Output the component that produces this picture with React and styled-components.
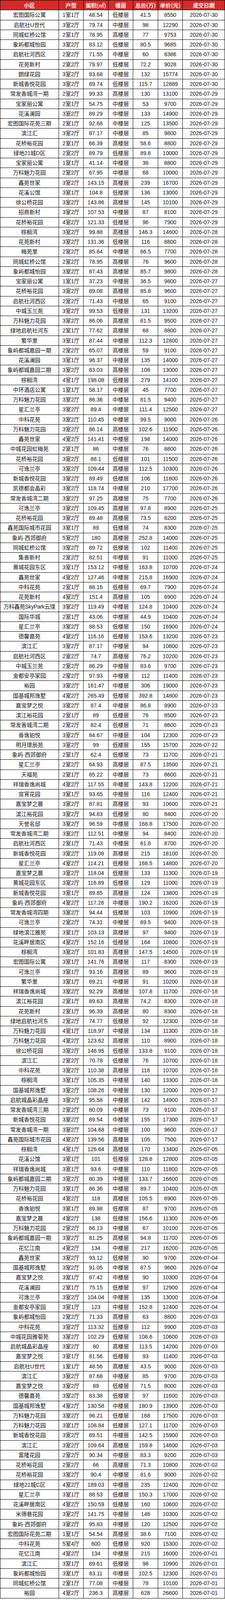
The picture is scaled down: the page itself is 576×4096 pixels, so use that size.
import React from 'react'
import styled, { createGlobalStyle } from 'styled-components'

const GlobalStyle = createGlobalStyle`
  html, body {
    margin: 0;
    padding: 0;
    background: #fff;
  }
  body {
    font-family: "Liberation Sans", "Noto Sans CJK SC", sans-serif;
  }
`

const raw = `宏图国际公寓|1室1厅|48.54|低楼层|41.5|8550|2026-07-30
启航社U世代|3室2厅|79.74|中楼层|98|12290|2026-07-30
同城虹桥公馆|2室1厅|78.95|高楼层|77|9753|2026-07-30
象屿都城怡园|3室2厅|83.12|低楼层|80.5|9685|2026-07-30
启航社河西区|2室2厅|71.55|中楼层|60|8386|2026-07-30
花苑新村|2室2厅|79.97|低楼层|72.2|9028|2026-07-30
朗绿花园|3室2厅|83.68|中楼层|132|15774|2026-07-30
新城香悦花园|3室2厅|89.74|低楼层|115.7|12889|2026-07-30
常发香城湾一期|2室2厅|99.33|高楼层|130|13100|2026-07-29
宝家丽公寓|2室1厅|54.75|中楼层|53|9700|2026-07-29
花溪澜园|3室2厅|89.29|中楼层|133|14900|2026-07-29
宏图国际花苑三期|2室1厅|92.68|中楼层|125|13500|2026-07-29
滨江汇|3室2厅|87.17|中楼层|85|9800|2026-07-29
花桥裕花园|2室1厅|66.39|高楼层|58.6|8800|2026-07-29
绿地21城D区|2室2厅|89.79|低楼层|89.8|10000|2026-07-29
宝家丽公寓|1室1厅|41.14|中楼层|36|8800|2026-07-29
万科魅力花园|2室2厅|67.95|中楼层|68|10000|2026-07-29
鑫苑世家|3室2厅|143.15|高楼层|239|16700|2026-07-29
花溪公馆|3室1厅|104.8|低楼层|136|13000|2026-07-29
徐公桥花园|3室2厅|143.86|高楼层|145|10100|2026-07-29
招商新村|3室2厅|107.53|中楼层|87|8100|2026-07-29
花桥裕花园|4室2厅|121.33|低楼层|96|7900|2026-07-29
棕榈湾|3室2厅|99.88|高楼层|146.3|14600|2026-07-28
花苑新村|3室2厅|131.36|低楼层|116|8800|2026-07-28
梅苑里|2室2厅|85.84|中楼层|66.5|7700|2026-07-28
同城虹桥公馆|2室2厅|78.95|高楼层|76|9600|2026-07-28
象屿都城怡园|3室2厅|87.43|高楼层|85.7|9800|2026-07-28
宝家丽公寓|1室1厅|37.23|中楼层|36.5|9800|2026-07-27
花桥裕花园|3室2厅|89.08|高楼层|85.8|9600|2026-07-27
启航社河西区|2室2厅|71.43|中楼层|65|9100|2026-07-27
中城玉兰苑|3室2厅|99.53|低楼层|131|13200|2026-07-27
万科魅力花园|3室2厅|86.06|高楼层|81.5|9500|2026-07-27
绿地启航社河东|2室1厅|77.62|高楼层|68|8800|2026-07-27
繁华里|3室1厅|87.44|中楼层|112.3|12800|2026-07-27
象屿都城嘉园一期|2室2厅|65.07|高楼层|59|9100|2026-07-27
花溪澜园|3室1厅|96.37|中楼层|135|14000|2026-07-27
象屿都城嘉园二期|3室2厅|83.03|高楼层|108|13000|2026-07-27
棕榈湾|4室1厅|198.08|低楼层|279|14100|2026-07-27
中环酒店公寓|1室1厅|58.17|中楼层|45|7700|2026-07-27
万科魅力花园|3室2厅|86.36|中楼层|81.5|9400|2026-07-27
星汇兰亭|3室2厅|89.4|中楼层|111.4|12500|2026-07-27
中科花苑|3室2厅|110.45|中楼层|99.5|9000|2026-07-26
万科魅力花园|3室2厅|86.14|高楼层|102.6|11900|2026-07-26
鑫苑世家|4室2厅|141.41|中楼层|198|14000|2026-07-26
中城花园虹梅苑|2室1厅|86|中楼层|76|8800|2026-07-26
花桥裕花园|3室2厅|88.1|低楼层|101|11500|2026-07-26
可逸兰亭|3室2厅|109.44|高楼层|112.5|10300|2026-07-26
新城香悦花园|3室2厅|89.49|低楼层|106|11800|2026-07-26
凯德都会晶彩|3室2厅|118.74|中楼层|210|17700|2026-07-26
常发香城湾二期|3室2厅|97.25|高楼层|75|7700|2026-07-26
可逸兰亭|3室2厅|109.45|高楼层|97.8|8900|2026-07-25
花桥裕花园|3室2厅|89.48|高楼层|73.5|8200|2026-07-25
鑫苑国际城市花园|3室1厅|89|低楼层|74|8300|2026-07-25
象屿·西郊御府|5室2厅|180|高楼层|252.8|14000|2026-07-25
同城虹桥公馆|3室2厅|89.72|低楼层|102|11400|2026-07-25
集善新村|2室2厅|82.51|中楼层|91|11000|2026-07-25
黄城花园东区|3室1厅|153.12|中楼层|163.8|10700|2026-07-24
鑫苑世家|4室2厅|127.46|中楼层|215.8|16900|2026-07-24
中科花苑|2室1厅|88.16|低楼层|69.7|7900|2026-07-24
花苑新村|4室2厅|151.4|高楼层|105|6900|2026-07-24
万科鑫苑SkyPark云璞|3室2厅|119.49|中楼层|124.8|10400|2026-07-24
国际华城|2室1厅|43.06|中楼层|44.9|10400|2026-07-24
星汇兰亭|3室2厅|88.53|低楼层|150|16900|2026-07-24
德馨嘉苑|4室2厅|116.16|低楼层|153.6|13200|2026-07-23
滨江汇|3室2厅|87.17|中楼层|94|10800|2026-07-23
启航社河西区|2室2厅|74.7|高楼层|76.2|10200|2026-07-23
中城玉兰苑|2室2厅|86.29|中楼层|83.6|9700|2026-07-23
金都安亭家园|2室2厅|97.93|中楼层|112|11400|2026-07-23
裕园|3室2厅|161.47|中楼层|306|19000|2026-07-23
国基城邦逸墅|4室2厅|265.49|低楼层|392.8|14800|2026-07-23
嘉宝梦之悦|3室2厅|87.4|中楼层|86.8|9900|2026-07-23
滨江裕花园|2室1厅|89|低楼层|76|8500|2026-07-23
常发香城湾二期|2室2厅|82.4|低楼层|71|8600|2026-07-23
香逸铂悦|3室2厅|84.67|中楼层|104|12300|2026-07-23
明月璟辰苑|3室2厅|99|低楼层|155|15700|2026-07-22
象屿·西郊御府|2室1厅|62.4|低楼层|73|11700|2026-07-21
星汇兰亭|2室2厅|64.93|高楼层|87.5|13500|2026-07-21
天福苑|2室1厅|85.22|中楼层|73|8600|2026-07-21
祥瑞香逸尚城|4室2厅|117.55|中楼层|143.8|12200|2026-07-21
宫宵花园|3室1厅|93.65|中楼层|116|12400|2026-07-21
嘉宝梦之晨|3室2厅|87.81|高楼层|93|10600|2026-07-21
滨江裕花园|3室2厅|94.83|低楼层|80|8400|2026-07-20
天誉名邸|3室2厅|96.59|中楼层|168.8|17500|2026-07-20
常发香城湾二期|3室2厅|112.51|中楼层|94|8400|2026-07-20
启航社河西区|2室1厅|71.43|中楼层|61.8|8700|2026-07-20
新城香悦花园|3室2厅|119.08|高楼层|215|18100|2026-07-20
星汇兰亭|4室2厅|114.21|低楼层|168.5|14800|2026-07-20
嘉宝梦之晨|3室2厅|118.04|低楼层|133|11300|2026-07-19
黄城花园东区|3室2厅|116.89|低楼层|129|11000|2026-07-19
新城香悦花园|3室1厅|89.85|高楼层|124|13800|2026-07-19
象屿·西郊御府|4室2厅|117.26|中楼层|190.2|16200|2026-07-19
常发香城湾四期|3室2厅|94.44|低楼层|103|10900|2026-07-19
可逸兰亭|2室2厅|74.31|中楼层|69.5|9400|2026-07-19
绿地滨江雅苑|3室1厅|103.13|高楼层|97|9400|2026-07-19
花溪畔居南区|4室2厅|152.16|低楼层|164|10800|2026-07-19
棕榈湾|3室2厅|101.83|高楼层|147.5|14500|2026-07-19
宏图国际公寓|3室1厅|141.76|高楼层|117|8300|2026-07-19
可逸兰亭|3室1厅|93.16|高楼层|89|9600|2026-07-19
繁华里|3室1厅|89.21|中楼层|91|10200|2026-07-18
祥瑞香逸尚城|3室2厅|92.29|高楼层|107.8|11700|2026-07-18
滨江裕花园|2室1厅|89.63|高楼层|74.2|8300|2026-07-18
花苑新村|2室1厅|96.39|高楼层|80|8300|2026-07-18
绿地启航社河东|2室2厅|74.77|低楼层|92|12300|2026-07-18
万科魅力花园|4室1厅|118.97|中楼层|134|11300|2026-07-18
万科魅力花园|4室2厅|123.62|高楼层|110|8900|2026-07-18
徐公桥花园|3室2厅|146.95|低楼层|133.8|9100|2026-07-18
滨江汇|2室2厅|70.78|低楼层|76|10700|2026-07-18
中科花苑|3室2厅|110.38|高楼层|118|10700|2026-07-18
棕榈湾|3室1厅|105.35|中楼层|140|13300|2026-07-18
国基城邦逸墅|3室2厅|108.26|中楼层|130|12000|2026-07-17
启航城晶彩晶座|3室2厅|95.58|中楼层|142|14900|2026-07-17
常发香城湾三期|2室2厅|80.09|中楼层|73|9100|2026-07-17
新城香悦花园|3室2厅|89.54|中楼层|155|17300|2026-07-17
常发香城湾一期|3室2厅|104.68|中楼层|100|9600|2026-07-17
鑫苑国际城市花园|4室2厅|139.56|高楼层|105|7500|2026-07-17
棕榈湾|4室1厅|126.64|高楼层|170|13400|2026-07-05
花溪公馆|3室1厅|101|低楼层|128.8|12800|2026-07-05
祥瑞香逸尚城|3室1厅|93.6|中楼层|110|11800|2026-07-05
象屿都城嘉园二期|3室2厅|80.39|中楼层|133.7|16600|2026-07-05
万科魅力花园|3室1厅|86.36|中楼层|89.7|10400|2026-07-05
花桥裕花园|4室2厅|118|高楼层|105.5|8900|2026-07-05
香逸铂悦|3室1厅|89.98|低楼层|87|9700|2026-07-05
嘉宝梦之晨|4室2厅|138|低楼层|156.6|11300|2026-07-05
万科魅力花园|2室2厅|66.13|中楼层|67|10100|2026-07-05
象屿都城嘉园一期|3室2厅|81.25|高楼层|94.8|11700|2026-07-05
花忆江南|4室2厅|134|中楼层|217|16200|2026-07-05
鑫苑世家|3室2厅|93.12|低楼层|90|9700|2026-07-04
国基城邦逸墅|3室2厅|91.05|中楼层|87.5|9600|2026-07-04
嘉宝梦之悦|3室1厅|87.42|中楼层|90|10300|2026-07-04
花溪澜园|2室1厅|75.15|低楼层|97|12900|2026-07-04
可逸兰亭|3室2厅|104.04|中楼层|135|13000|2026-07-04
金都安亭家园|3室1厅|123|中楼层|152.8|12400|2026-07-04
象屿都城怡园|2室2厅|71.33|高楼层|63|8800|2026-07-03
中科花苑|3室2厅|113.32|低楼层|112|9900|2026-07-03
中城花园雅菊苑|3室2厅|102.29|低楼层|108.6|10600|2026-07-03
启航城晶彩晶座|3室2厅|80|高楼层|113.5|14200|2026-07-03
嘉宝梦之悦|3室1厅|81.56|低楼层|93|11400|2026-07-03
启航社U世代|1室1厅|48.56|高楼层|43.5|9000|2026-07-03
滨江汇|3室2厅|87.68|中楼层|85|9700|2026-07-03
嘉宝梦之悦|3室2厅|89|低楼层|71.5|8000|2026-07-03
德馨嘉苑|3室2厅|83.38|低楼层|97|11600|2026-07-03
国基城邦逸墅|4室2厅|130.58|中楼层|180.9|13900|2026-07-03
万科魅力花园|3室2厅|96.21|低楼层|168|17500|2026-07-03
万科魅力花园|3室1厅|108.84|低楼层|127.1|11700|2026-07-03
新城香悦花园|3室2厅|89.51|中楼层|142.5|15900|2026-07-03
滨江汇|3室2厅|109.64|高楼层|159.8|14600|2026-07-03
富隆花园|2室2厅|90.34|中楼层|83.3|9200|2026-07-03
花桥裕花园|2室2厅|66|高楼层|71.3|10800|2026-07-02
花桥裕花园|3室2厅|90.4|中楼层|81.6|9000|2026-07-02
绿地21城C区|4室2厅|189.03|中楼层|235|12400|2026-07-02
星汇兰亭|3室1厅|88.53|低楼层|150.3|17000|2026-07-02
花溪畔居南区|4室2厅|150.59|低楼层|160|10600|2026-07-02
米筛巷花园|3室2厅|141.75|中楼层|146|10300|2026-07-02
象屿·西郊御府|3室2厅|95.83|中楼层|120|12500|2026-07-02
宏图国际花苑二期|1室1厅|54.54|高楼层|38.6|7100|2026-07-02
中科花苑|5室4厅|600|低楼层|920|15300|2026-07-02
花忆江南|4室2厅|134|中楼层|215|16000|2026-07-01
滨江汇|3室1厅|89.61|低楼层|98|10900|2026-07-01
象屿都城怡园|3室1厅|83.11|中楼层|102.5|12300|2026-07-01
同城虹桥公馆|2室1厅|77.08|中楼层|78|10100|2026-07-01
裕园|4室2厅|236.3|高楼层|628|26600|2026-07-01`

const rows = raw.split('\n').map(line => line.split('|'))

const headers = ['小区', '户型', '面积(㎡)', '楼层', '总价(万)', '单价(元)', '成交日期']
const widths = [149.5, 63.5, 63.5, 63.9, 63.1, 63.5, 107.8]

const Table = styled.table`
  border-collapse: collapse;
  table-layout: fixed;
  width: 576px;
  font-family: "Liberation Sans", "Noto Sans CJK SC", sans-serif;
  color: #111;
`

const Row = styled.tr`
  height: 25.26px;
`

const HeadCell = styled.th`
  background: #d8292a;
  color: #fff;
  font-weight: 700;
  font-size: 14px;
  font-family: "Noto Sans CJK SC", sans-serif;
  border: 1px solid #000;
  padding: 0;
  text-align: center;
  line-height: 1;
  white-space: nowrap;
`

const Cell = styled.td`
  border: 1px solid #000;
  padding: 0;
  text-align: center;
  font-size: 14px;
  line-height: 1;
  white-space: nowrap;
  letter-spacing: ${p => (p.$tight ? '-0.3px' : '0')};
`

const App = () => {
  return (
    <>
      <GlobalStyle />
      <Table>
        <colgroup>
          {widths.map((w, i) => <col key={i} style={{ width: w }} />)}
        </colgroup>
        <thead>
          <Row>
            {headers.map(h => <HeadCell key={h}>{h}</HeadCell>)}
          </Row>
        </thead>
        <tbody>
          {rows.map((r, i) => (
            <Row key={i}>
              {r.map((c, j) => (
                <Cell key={j} $tight={j === 0 && c.length > 9}>{c}</Cell>
              ))}
            </Row>
          ))}
        </tbody>
      </Table>
    </>
  )
}

export default App
